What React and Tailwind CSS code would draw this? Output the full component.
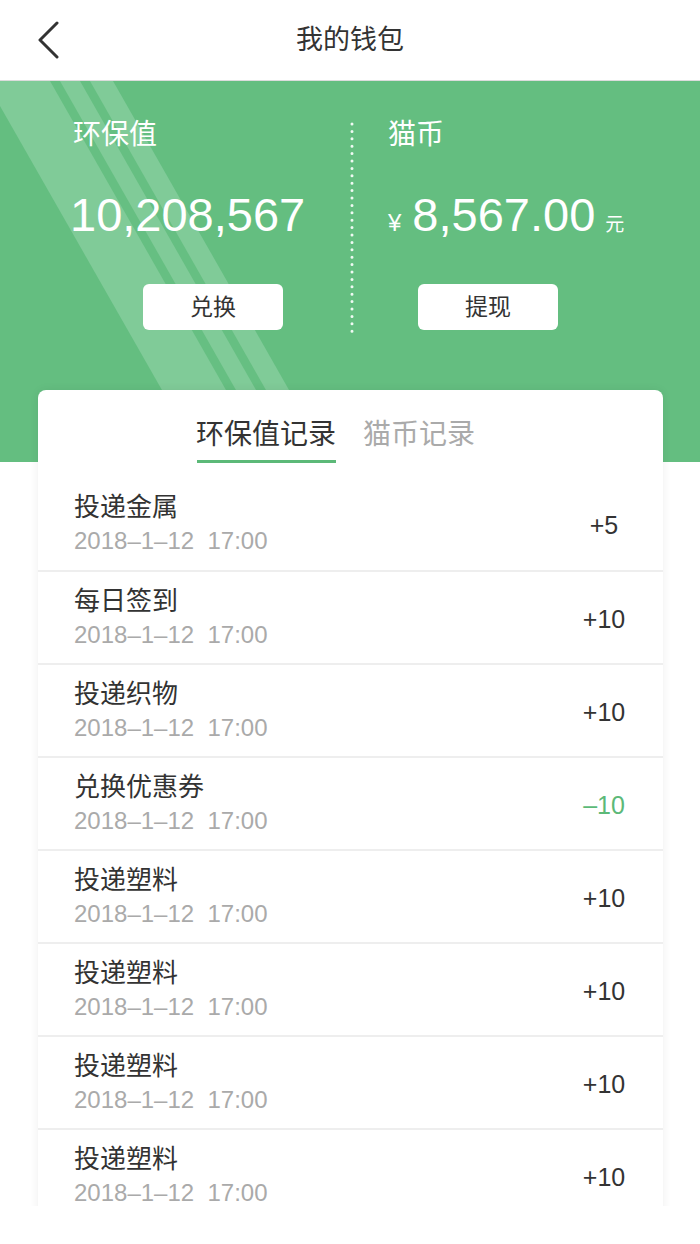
import React from 'react'

const RECORDS = [
  { title: '投递金属', amount: '+5' },
  { title: '每日签到', amount: '+10' },
  { title: '投递织物', amount: '+10' },
  { title: '兑换优惠券', amount: '–10', minus: true },
  { title: '投递塑料', amount: '+10' },
  { title: '投递塑料', amount: '+10' },
  { title: '投递塑料', amount: '+10' },
  { title: '投递塑料', amount: '+10' },
]

const Stripes = () => (
  <svg className="absolute inset-0" width="700" height="381" viewBox="0 0 700 381">
    {/* wide light band */}
    <polygon points="0,0 113,0 330,381 203,381 0,25" fill="#80cb98" />
    {/* thin darker stripes inside it */}
    <polygon points="50,0 60,0 277,381 267,381" fill="#66bf82" />
    <polygon points="80,0 90,0 307,381 297,381" fill="#66bf82" />
  </svg>
)

const App = () => {
  return (
    <div className="w-[700px] h-[1244px] bg-white font-['Liberation_Sans','Noto_Sans_CJK_SC',sans-serif]">
      <div className="h-[1206px] overflow-hidden">
        {/* Header */}
        <div className="h-[81px] border-b border-[#dcdcdc] bg-white flex items-center relative">
          <svg className="absolute left-[36px] top-[21px]" width="24" height="38" viewBox="0 0 24 38">
            <path d="M21 2 L4 19 L21 36" fill="none" stroke="#333" strokeWidth="3" strokeLinecap="round" strokeLinejoin="round" />
          </svg>
          <h1 className="w-full text-center text-[27px] text-[#333] leading-none">我的钱包</h1>
        </div>

        {/* Balance panel */}
        <div className="relative h-[381px] bg-[#64be80] overflow-hidden">
          <Stripes />
          <div className="relative flex h-full">
            <div className="w-[350px] pl-[73px] pt-[36px] flex flex-col text-white">
              <p className="text-[28px] leading-[36px]">环保值</p>
              <p className="mt-[34px] h-[56px] text-[47px] leading-[56px] -ml-[3px]">10,208,567</p>
              <button className="mt-[41px] ml-[70px] w-[140px] h-[46px] rounded-[6px] bg-white text-[23px] text-[#333]">兑换</button>
            </div>
            <div className="pt-[41px]">
              <svg width="4" height="214" viewBox="0 0 4 214">
                <line x1="2" y1="2" x2="2" y2="212" stroke="#f0faf3" strokeWidth="3" strokeLinecap="round" strokeDasharray="0 7.4" />
              </svg>
            </div>
            <div className="pl-[34px] pt-[36px] flex flex-col text-white">
              <p className="text-[28px] leading-[36px]">猫币</p>
              <div className="mt-[34px] h-[56px] flex items-baseline leading-[56px]">
                <span className="text-[24px] mr-[11px]">¥</span>
                <span className="text-[47px]">8,567.00</span>
                <span className="text-[19px] ml-[10px]">元</span>
              </div>
              <button className="mt-[41px] ml-[30px] w-[140px] h-[46px] rounded-[6px] bg-white text-[23px] text-[#333]">提现</button>
            </div>
          </div>
        </div>

        {/* Records card */}
        <div className="relative -mt-[72px] ml-[38px] w-[625px] bg-white rounded-t-[8px] shadow-[0_0_10px_rgba(0,0,0,0.07)]">
          <div className="h-[87px] flex items-end pl-[158px] gap-[27px]">
            <div className="flex flex-col items-center">
              <span className="text-[28px] leading-[36px] text-[#333]">环保值记录</span>
              <div className="mt-[7px] mb-[14px] w-[139px] h-[3px] bg-[#5cb978]" />
            </div>
            <div className="flex flex-col">
              <span className="text-[28px] leading-[36px] text-[#aaa]">猫币记录</span>
              <div className="mt-[7px] mb-[14px] h-[3px]" />
            </div>
          </div>

          {RECORDS.map((r, i) => (
            <div key={i} className={`h-[93px] flex items-center ${i === 0 ? '' : 'border-t-2 border-[#eeeeee]'}`}>
              <div className="flex-1 pl-[36px] flex flex-col">
                <span className="text-[26px] leading-[32px] text-[#333]">{r.title}</span>
                <span className="mt-[3px] text-[24px] leading-[30px] text-[#aaa] whitespace-pre">2018–1–12  17:00</span>
              </div>
              <div className={`w-[80px] mr-[19px] mt-[4px] text-center text-[25px] ${r.minus ? 'text-[#5cb978]' : 'text-[#333]'}`}>
                {r.amount}
              </div>
            </div>
          ))}
        </div>
      </div>
    </div>
  )
}

export default App
